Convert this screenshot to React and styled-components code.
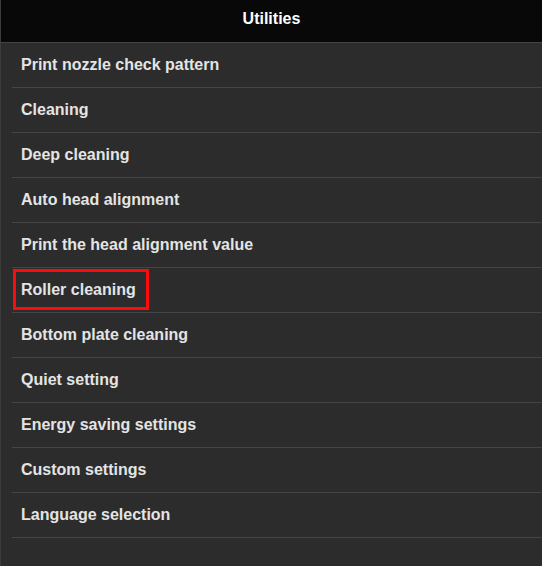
import React from "react";
import styled, { createGlobalStyle } from "styled-components";

const GlobalStyle = createGlobalStyle`
  html, body {
    margin: 0;
    padding: 0;
    background: #2c2c2c;
  }
  body {
    font-family: "Liberation Sans", Arial, Helvetica, sans-serif;
  }
`;

const Screen = styled.div`
  width: 542px;
  height: 566px;
  background: #2c2c2c;
  border-left: 1px solid #3c3c3c;
  box-sizing: border-box;
  display: flex;
  flex-direction: column;
  overflow: hidden;
`;

const Header = styled.div`
  height: 43px;
  box-sizing: border-box;
  padding-bottom: 5px;
  background: #080808;
  border-bottom: 1px solid #454545;
  display: flex;
  align-items: center;
  justify-content: center;
  color: #ffffff;
  font-size: 16px;
  font-weight: 700;
  flex-shrink: 0;
`;

const List = styled.div`
  display: flex;
  flex-direction: column;
  padding-left: 11px;
`;

const Row = styled.div`
  height: 45px;
  box-sizing: border-box;
  border-bottom: 1px solid #454545;
  display: flex;
  align-items: center;
  padding-left: 9px;
  position: relative;
`;

const Label = styled.span`
  color: #e4e4e4;
  font-size: 16px;
  font-weight: 700;
  margin-top: -1px;
`;

const Highlight = styled.div`
  position: absolute;
  left: 1px;
  top: 1px;
  width: 136px;
  height: 41px;
  border: 3px solid #ff0a0a;
  box-sizing: border-box;
`;

const items = [
  "Print nozzle check pattern",
  "Cleaning",
  "Deep cleaning",
  "Auto head alignment",
  "Print the head alignment value",
  "Roller cleaning",
  "Bottom plate cleaning",
  "Quiet setting",
  "Energy saving settings",
  "Custom settings",
  "Language selection",
];

export default function App() {
  return (
    <>
      <GlobalStyle />
      <Screen>
        <Header>Utilities</Header>
        <List>
          {items.map((item) => (
            <Row key={item}>
              {item === "Roller cleaning" && <Highlight />}
              <Label>{item}</Label>
            </Row>
          ))}
        </List>
      </Screen>
    </>
  );
}
